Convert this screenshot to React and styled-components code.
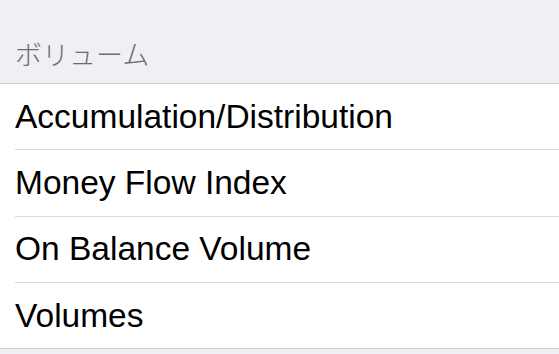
import React from "react";
import styled, { createGlobalStyle } from "styled-components";

const GlobalStyle = createGlobalStyle`
  html, body {
    margin: 0;
    padding: 0;
    background: #efeff4;
  }
`;

const indicators = [
  "Accumulation/Distribution",
  "Money Flow Index",
  "On Balance Volume",
  "Volumes",
];

const App = () => {
  return (
    <>
      <GlobalStyle />
      <Page>
        <SectionHeader>ボリューム</SectionHeader>
        <List>
          {indicators.map((name, i) => (
            <Row key={name} last={i === indicators.length - 1}>
              <Label>{name}</Label>
            </Row>
          ))}
        </List>
      </Page>
    </>
  );
};

const Page = styled.div`
  width: 559px;
  height: 354px;
  overflow: hidden;
  background: #efeff4;
`;

const SectionHeader = styled.div`
  display: flex;
  align-items: flex-end;
  height: 84px;
  box-sizing: border-box;
  padding: 0 15px 16px;
  font-family: "Noto Sans CJK JP", "Liberation Sans", sans-serif;
  font-size: 27px;
  font-weight: 300;
  line-height: 1;
  color: #6d6d72;
  border-bottom: 1px solid #c8c7cc;
`;

const List = styled.div`
  display: flex;
  flex-direction: column;
  background: #ffffff;
  border-bottom: 1px solid #c8c7cc;
`;

const Row = styled.div`
  display: flex;
  align-items: center;
  height: 65.25px;
  margin-left: 15px;
  border-bottom: ${({ last }) => (last ? "none" : "1px solid #d9d9dc")};
`;

const Label = styled.span`
  font-family: "Liberation Sans", Arial, sans-serif;
  font-size: 33.5px;
  color: #000000;
  line-height: 1;
`;

export default App;
